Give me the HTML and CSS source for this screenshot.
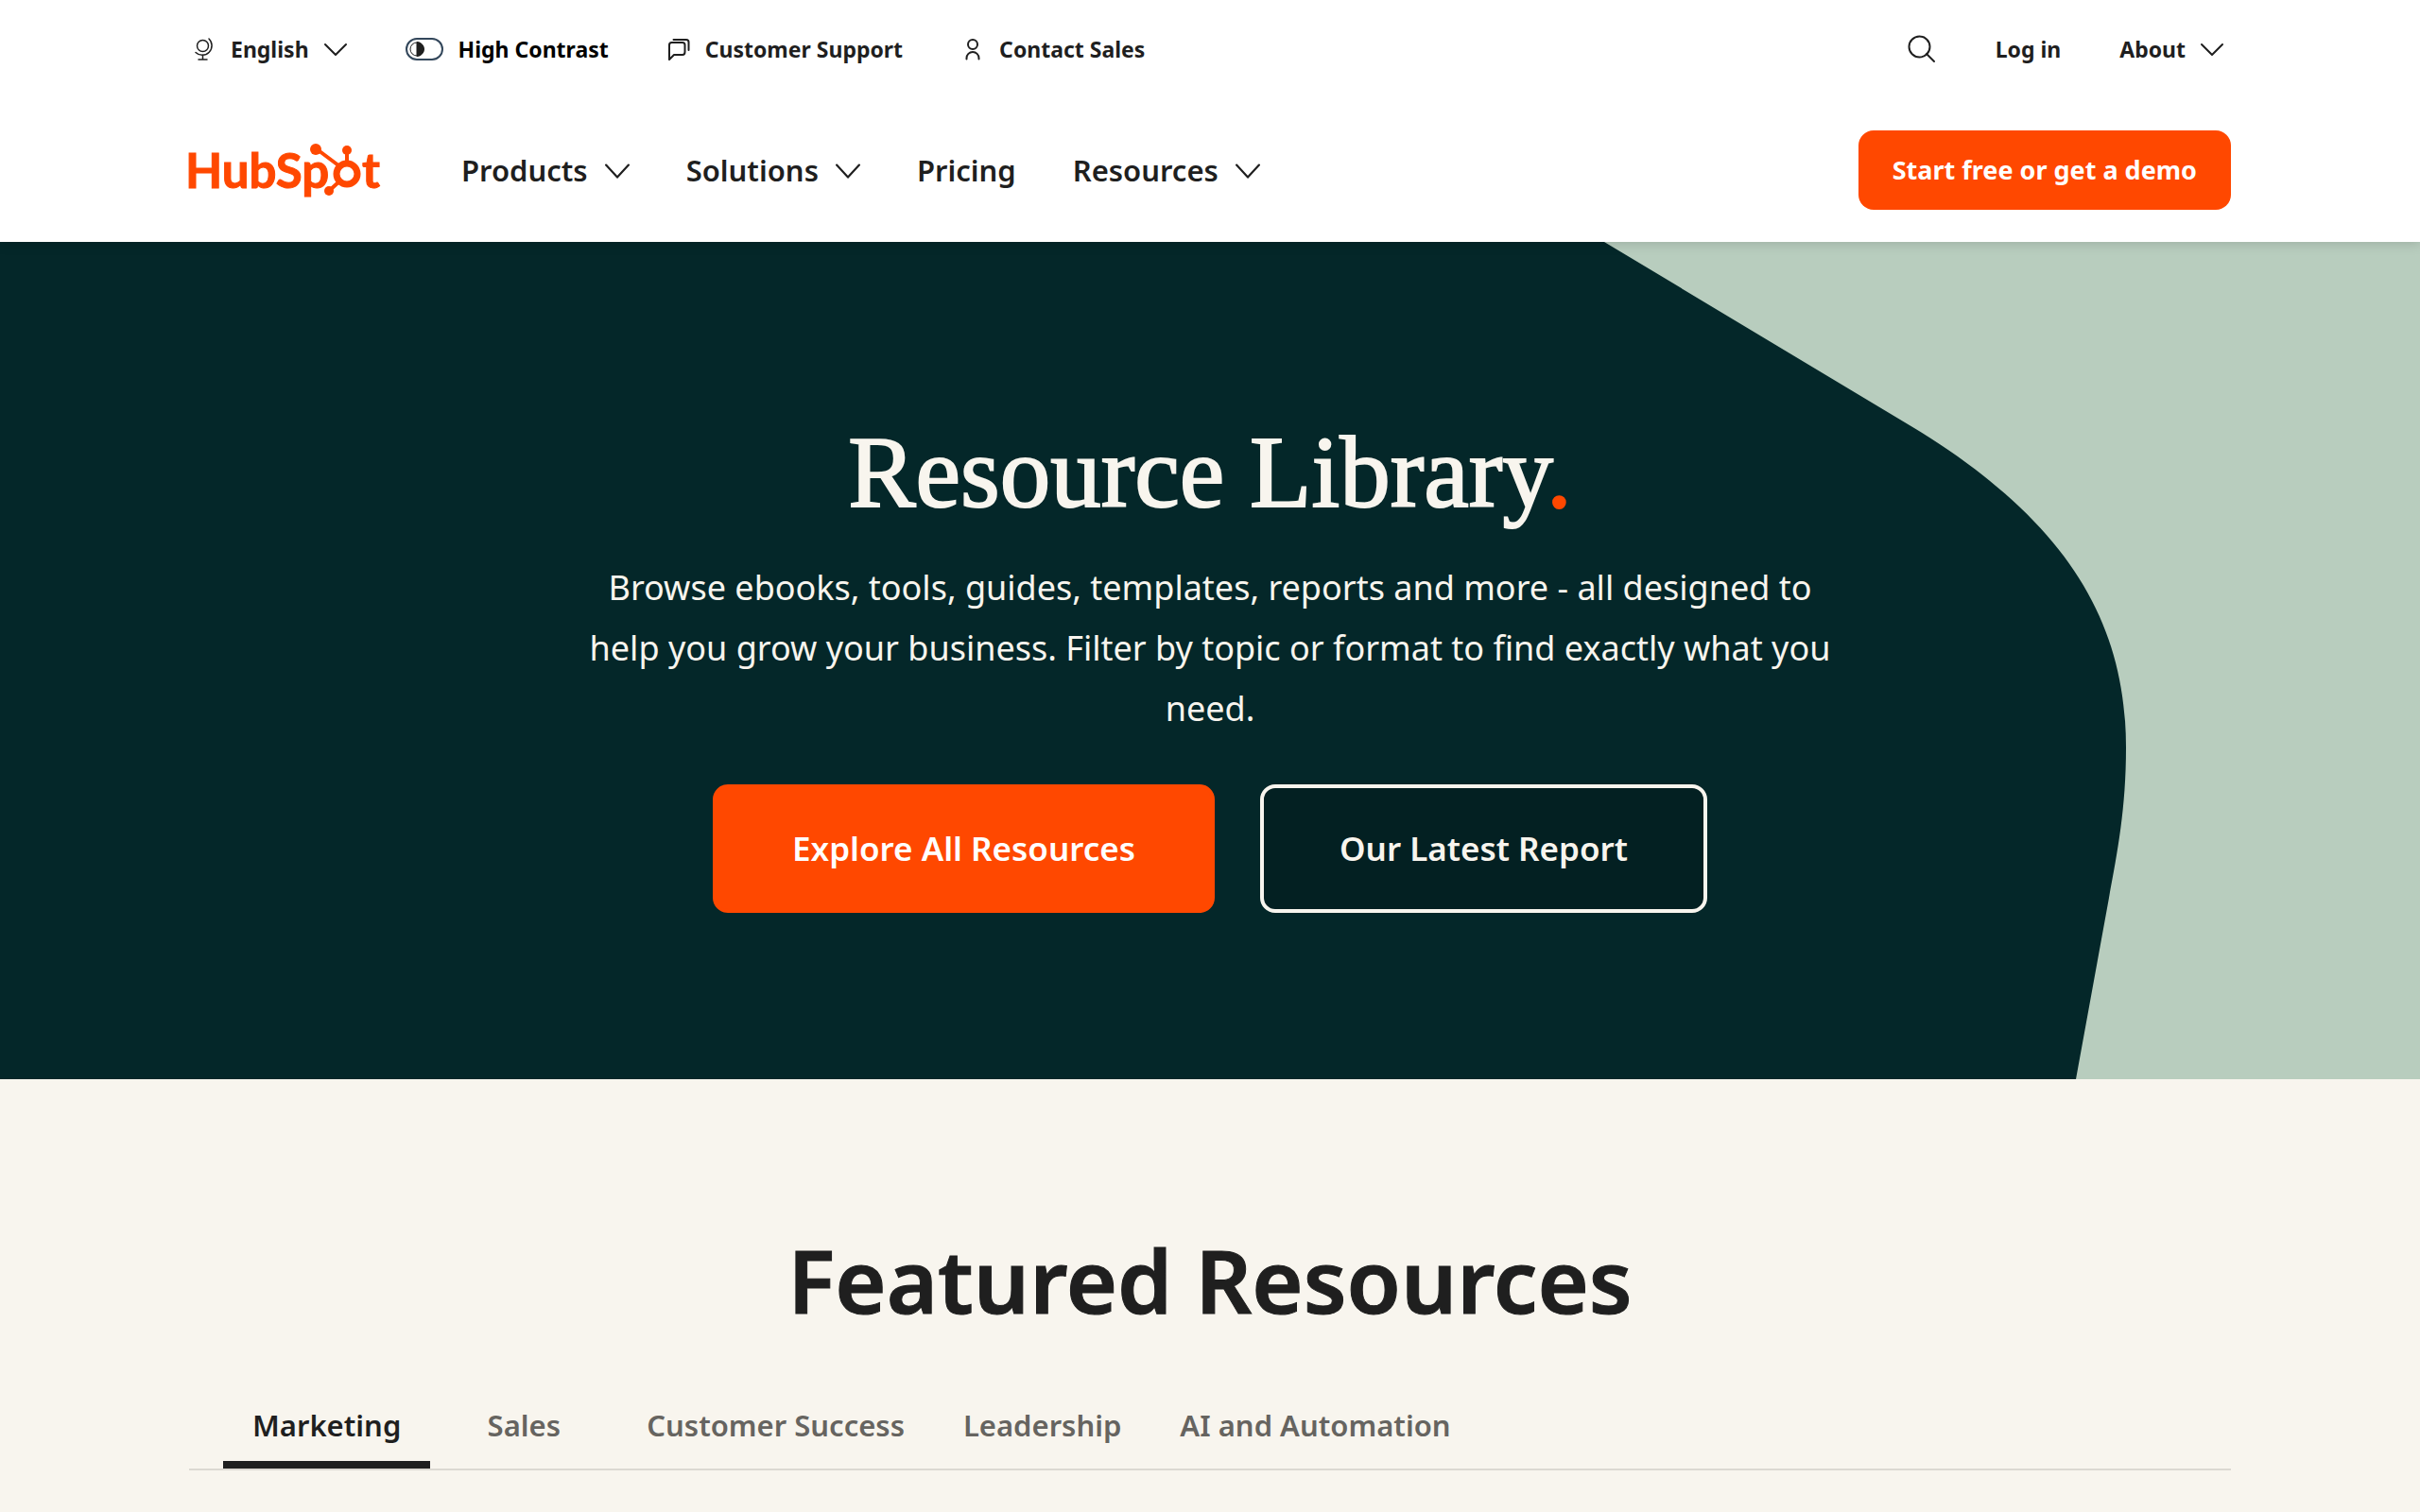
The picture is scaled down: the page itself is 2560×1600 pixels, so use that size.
FILE: index.html
```
<!DOCTYPE html>
<html lang="en">
<head>
    <meta charset="utf-8">
    <meta name="viewport" content="width=device-width, initial-scale=1">
    <title>Resource Library</title>
    <link rel="stylesheet" href="styles.css">
</head>
<body>
    <header class="site-header">
        <!-- utility bar -->
        <div class="top-bar container">
            <div class="top-left">
                <button type="button" class="top-item">
                    <svg class="icon icon-globe" viewBox="0 0 24 24">
                        <circle cx="10.500" cy="8.500" r="6"/>
                        <path d="M17 1A9.500 9.500 0 0 1 3 15.500M10.500 18v5M6 23h9"/>
                    </svg>
                    <span>English</span>
                    <svg class="icon" viewBox="0 0 24 24"><path d="M1 7l11 11L23 7"/></svg>
                </button>
                <label class="top-item contrast">
                    <input type="checkbox" class="contrast-input">
                    <svg class="toggle" viewBox="0 0 40 24">
                        <rect class="toggle-track" x="1" y="1" width="38" height="22" rx="11"/>
                        <circle cx="12" cy="12" r="7"/>
                        <path class="filled" d="M12 4.500a7.500 7.500 0 0 1 0 15z"/>
                    </svg>
                    <span>High Contrast</span>
                </label>
                <a href="#" class="top-item">
                    <svg class="icon" viewBox="0 0 24 24">
                        <path d="M2 23V7.500Q2 5 4.500 5H16Q18.500 5 18.500 7.500V15Q18.500 18 16 18H7zM6.500 2H20Q22.500 2 22.500 4.500V13"/>
                    </svg>
                    <span>Customer Support</span>
                </a>
                <a href="#" class="top-item">
                    <svg class="icon" viewBox="0 0 24 24">
                        <circle cx="12" cy="7" r="5"/>
                        <path d="M5.500 22.500v-1a6.500 6.500 0 0 1 13 0v1"/>
                    </svg>
                    <span>Contact Sales</span>
                </a>
            </div>
            <div class="top-right">
                <button type="button" class="top-item" aria-label="Search">
                    <svg class="icon icon-search" viewBox="0 0 32 32">
                        <circle cx="13.500" cy="13.500" r="11"/>
                        <path d="M21 21l8 8"/>
                    </svg>
                </button>
                <a href="#" class="top-item">Log in</a>
                <button type="button" class="top-item">
                    <span>About</span>
                    <svg class="icon" viewBox="0 0 24 24"><path d="M1 7l11 11L23 7"/></svg>
                </button>
            </div>
        </div>

        <!-- main navigation -->
        <div class="main-bar container">
            <a href="#" class="logo" aria-label="HubSpot home">
                <svg viewBox="0 0 200 60">
                    <text x="-4" y="49">HubSp</text>
                    <text x="183" y="49">t</text>
                    <circle class="ring" cx="167" cy="34" r="11"/>
                    <path class="spoke" d="M134 7l24 18M167 9v14M148 52l11-10"/>
                    <circle cx="134" cy="8" r="6"/>
                    <circle cx="167" cy="9" r="5"/>
                    <circle cx="148" cy="52" r="5"/>
                </svg>
            </a>
            <nav class="main-nav">
                <button type="button" class="nav-item">Products
                    <svg class="icon" viewBox="0 0 24 24"><path d="M1 7l11 12L23 7"/></svg>
                </button>
                <button type="button" class="nav-item">Solutions
                    <svg class="icon" viewBox="0 0 24 24"><path d="M1 7l11 12L23 7"/></svg>
                </button>
                <a href="#" class="nav-item">Pricing</a>
                <button type="button" class="nav-item">Resources
                    <svg class="icon" viewBox="0 0 24 24"><path d="M1 7l11 12L23 7"/></svg>
                </button>
            </nav>
            <a href="#" class="cta">Start free or get a demo</a>
        </div>
    </header>

    <main>
        <section class="hero">
            <svg class="hero-shape" viewBox="0 0 880 886" preserveAspectRatio="xMaxYMin slice" aria-hidden="true">
                <path d="M17 0L345 197C505 295 569 400 569 535C569 600 560 645 551 694L516 886H880V0z"/>
            </svg>
            <div class="hero-content">
                <h1>Resource Library<span class="dot">.</span></h1>
                <p>Browse ebooks, tools, guides, templates, reports and more - all designed to help you grow your business. Filter by topic or format to find exactly what you need.</p>
                <div class="hero-buttons">
                    <a href="#" class="button button-primary">Explore All Resources</a>
                    <a href="#" class="button button-secondary">Our Latest Report</a>
                </div>
            </div>
        </section>

        <section class="featured container">
            <h2>Featured Resources</h2>
            <div class="tabs" role="tablist">
                <button type="button" class="tab active" role="tab" aria-selected="true">Marketing</button>
                <button type="button" class="tab" role="tab" aria-selected="false">Sales</button>
                <button type="button" class="tab" role="tab" aria-selected="false">Customer Success</button>
                <button type="button" class="tab" role="tab" aria-selected="false">Leadership</button>
                <button type="button" class="tab" role="tab" aria-selected="false">AI and Automation</button>
            </div>
        </section>
    </main>
</body>
</html>
```

FILE: styles.css
```
* {
    box-sizing: border-box;
}

body {
    margin: 0;
    background-color: #f8f5ee;
    color: #1f1f1f;
    font-family: "Noto Sans", sans-serif;
}

a {
    color: inherit;
    text-decoration: none;
}

button {
    padding: 0;
    border: none;
    background: none;
    color: inherit;
    font: inherit;
    cursor: pointer;
}

.container {
    max-width: 2160px;
    margin: 0 auto;
}

/* Icons */
.icon {
    flex: none;
    width: 24px;
    height: 24px;
    fill: none;
    stroke: currentColor;
    stroke-width: 2;
    stroke-linecap: round;
    stroke-linejoin: round;
}

.icon-globe {
    overflow: visible;
    stroke-width: 1.5;
}

.icon-search {
    width: 32px;
    height: 32px;
}

/* Header */
.site-header {
    position: relative;
    z-index: 1;
    background-color: #ffffff;
    box-shadow: 0 2px 12px rgba(0, 0, 0, 0.15);
}

.top-bar {
    display: flex;
    justify-content: space-between;
    align-items: center;
    height: 103px;
    padding: 0 8px 0 4px;
    font-size: 23px;
    font-weight: 700;
}

.top-left,
.top-right {
    display: flex;
    align-items: center;
    gap: 62px;
}

.top-item {
    display: flex;
    align-items: center;
    gap: 16px;
    white-space: nowrap;
}

.contrast {
    position: relative;
    color: #000000;
    cursor: pointer;
}

.contrast-input {
    position: absolute;
    opacity: 0;
}

.toggle {
    flex: none;
    width: 40px;
    height: 24px;
    fill: none;
    stroke: #1f1f1f;
    stroke-width: 1;
}

.toggle-track {
    stroke: #33475b;
    stroke-width: 2;
}

.filled {
    fill: #1f1f1f;
}

.main-bar {
    display: flex;
    align-items: center;
    height: 153px;
}

.logo svg {
    display: block;
    width: 200px;
    height: 60px;
    overflow: visible;
    fill: #ff4800;
    font-family: Lato, sans-serif;
    font-size: 51px;
    font-weight: 700;
}

.logo text {
    stroke: #ff4800;
    stroke-width: 1;
}

.logo .ring {
    fill: none;
    stroke: #ff4800;
    stroke-width: 7;
}

.logo .spoke {
    stroke: #ff4800;
    stroke-width: 4;
}

.main-nav {
    display: flex;
    gap: 60px;
    margin-left: 88px;
    font-size: 31px;
    font-weight: 600;
}

.nav-item {
    display: flex;
    align-items: center;
    gap: 18px;
}

.nav-item .icon {
    width: 26px;
    height: 26px;
}

.cta {
    margin-left: auto;
    padding: 22px 36px;
    border-radius: 16px;
    background-color: #ff4800;
    color: #ffffff;
    font-size: 27px;
    font-weight: 700;
    line-height: 40px;
}

/* Hero */
.hero {
    position: relative;
    overflow: hidden;
    padding: 176px 0;
    background-color: #042729;
    color: #f8f5ee;
    text-align: center;
}

.hero-shape {
    position: absolute;
    top: 0;
    right: 0;
    height: 100%;
    fill: #b8cdbe;
}

.hero-content {
    position: relative;
    max-width: 1340px;
    margin: 0 auto;
}

.hero h1 {
    margin: 0 0 22px;
    font-family: "Liberation Serif", serif;
    font-size: 107px;
    font-weight: 400;
    line-height: 136px;
    -webkit-text-stroke: 2px currentColor;
}

.dot {
    color: #ff4800;
}

.hero p {
    margin: 0 0 48px;
    font-size: 36px;
    line-height: 64px;
}

.hero-buttons {
    display: flex;
    justify-content: center;
    gap: 48px;
}

.button {
    padding: 40px 80px;
    border: 4px solid #ff4800;
    border-radius: 16px;
    font-size: 35px;
    font-weight: 600;
    line-height: 48px;
}

.button-primary {
    background-color: #ff4800;
    color: #ffffff;
}

.button-secondary {
    border-color: #f8f5ee;
    background-color: #032022;
}

/* Featured resources */
.featured {
    padding-top: 156px;
}

.featured h2 {
    margin: 0 0 62px;
    font-size: 93px;
    font-weight: 600;
    line-height: 112px;
    text-align: center;
    -webkit-text-stroke: 1px currentColor;
}

.tabs {
    display: flex;
    padding: 0 36px;
    border-bottom: 2px solid #dcd9d2;
}

.tab {
    min-width: 198px;
    padding: 16px 31px 18px;
    border-bottom: 8px solid transparent;
    color: #666460;
    font-size: 31px;
    font-weight: 600;
    line-height: 40px;
}

.tab.active {
    border-bottom-color: #1f1f1f;
    color: #1f1f1f;
}
```
